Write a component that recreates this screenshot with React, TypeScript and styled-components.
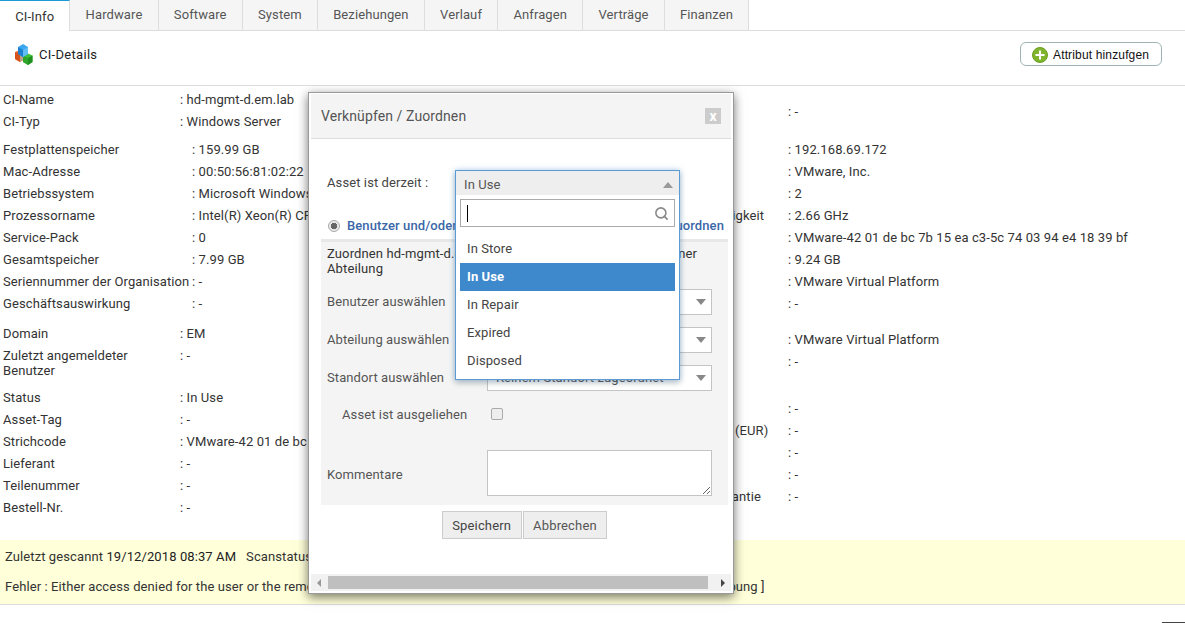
import React from 'react'
import styled, { createGlobalStyle } from 'styled-components'
import { Search } from 'lucide-react'

const GlobalStyle = createGlobalStyle`
  html, body {
    margin: 0;
    padding: 0;
    background: #fff;
  }
  body {
    font-family: Roboto, "Liberation Sans", sans-serif;
    font-size: 13px;
    letter-spacing: 0.1px;
    color: #333;
  }
`

const tabs = ['CI-Info', 'Hardware', 'Software', 'System', 'Beziehungen', 'Verlauf', 'Anfragen', 'Verträge', 'Finanzen']

type Row = { label: string; value: string; tall?: boolean }

const leftGroups: { labelWidth: number; gap: number; rows: Row[] }[] = [
  {
    labelWidth: 177,
    gap: 3,
    rows: [
      { label: 'CI-Name', value: 'hd-mgmt-d.em.lab' },
      { label: 'CI-Typ', value: 'Windows Server' },
    ],
  },
  {
    labelWidth: 189,
    gap: 6,
    rows: [
      { label: 'Festplattenspeicher', value: '159.99 GB' },
      { label: 'Mac-Adresse', value: '00:50:56:81:02:22' },
      { label: 'Betriebssystem', value: 'Microsoft Windows Server 2012 R2' },
      { label: 'Prozessorname', value: 'Intel(R) Xeon(R) CPU X5650' },
      { label: 'Service-Pack', value: '0' },
      { label: 'Gesamtspeicher', value: '7.99 GB' },
      { label: 'Seriennummer der Organisation', value: '-' },
      { label: 'Geschäftsauswirkung', value: '-' },
    ],
  },
  {
    labelWidth: 177,
    gap: 8,
    rows: [
      { label: 'Domain', value: 'EM' },
      { label: 'Zuletzt angemeldeter Benutzer', value: '-', tall: true },
      { label: 'Status', value: 'In Use' },
      { label: 'Asset-Tag', value: '-' },
      { label: 'Strichcode', value: 'VMware-42 01 de bc 7b 15 ea c3' },
      { label: 'Lieferant', value: '-' },
      { label: 'Teilenummer', value: '-' },
      { label: 'Bestell-Nr.', value: '-' },
    ],
  },
]

const rightGroups: { gap: number; rows: Row[] }[] = [
  {
    gap: 15,
    rows: [{ label: 'Standort', value: '-' }],
  },
  {
    gap: 16,
    rows: [
      { label: 'IP-Adresse', value: '192.168.69.172' },
      { label: 'Hersteller', value: 'VMware, Inc.' },
      { label: 'Anzahl Prozessoren', value: '2' },
      { label: 'Prozessorgeschwindigkeit', value: '2.66 GHz' },
      { label: 'Seriennummer', value: 'VMware-42 01 de bc 7b 15 ea c3-5c 74 03 94 e4 18 39 bf' },
      { label: 'Virtueller Speicher', value: '9.24 GB' },
      { label: 'Gerätemodell', value: 'VMware Virtual Platform' },
      { label: 'Abteilung', value: '-' },
    ],
  },
  {
    gap: 14,
    rows: [
      { label: 'Produkt', value: 'VMware Virtual Platform' },
      { label: 'Standort', value: '-' },
    ],
  },
  {
    gap: 25,
    rows: [
      { label: 'Erworben am', value: '-' },
      { label: 'Anschaffungskosten (EUR)', value: '-' },
      { label: 'Eingangsdatum', value: '-' },
      { label: 'Leasing', value: '-' },
      { label: 'Ablaufdatum der Garantie', value: '-' },
    ],
  },
]

const statusItems = ['In Store', 'In Use', 'In Repair', 'Expired', 'Disposed']

const CubesIcon = () => (
  <svg width="20" height="22" viewBox="1 0 20 22">
    <path d="M2 8l5-2 5 2v7l-5 3-5-3z" fill="#e8692c" />
    <path d="M2 8l5 2.500V18l-5-3z" fill="#d4521c" />
    <path d="M7 10.500L12 8v7l-5 3z" fill="#b9a18a" />
    <path d="M10 11.500l5-2 4.500 2v6.500l-4.500 3-5-3z" fill="#3fc23a" />
    <path d="M10 11.500l5 2.500v7l-5-3z" fill="#2fa52c" />
    <path d="M15 14l4.500-2.500V18l-4.500 3z" fill="#1f8f1f" />
    <path d="M5 3l5-3 5 3v7l-5 3-5-3z" fill="#3aa6ee" />
    <path d="M5 3l5 3v7l-5-3z" fill="#1c7fd0" />
    <path d="M10 6l5-3v7l-5 3z" fill="#62bdf5" />
  </svg>
)

const PlusIcon = () => (
  <svg width="16" height="16" viewBox="0 0 16 16">
    <circle cx="8" cy="8" r="7.500" fill="#7fb52c" stroke="#6a9c22" />
    <path d="M8 3.500v9M3.500 8h9" stroke="#fff" strokeWidth="2" />
  </svg>
)

const App = () => (
  <S.Page>
    <GlobalStyle />
    <S.TabBar>
      {tabs.map((tab, i) => (
        <S.Tab key={tab} $active={i === 0}>{tab}</S.Tab>
      ))}
    </S.TabBar>

    <S.DetailsHeader>
      <S.DetailsTitle>
        <CubesIcon />
        CI-Details
      </S.DetailsTitle>
      <S.AddButton>
        <PlusIcon />
        Attribut hinzufgen
      </S.AddButton>
    </S.DetailsHeader>

    <S.Columns>
      <S.LeftColumn>
        {leftGroups.map(group => (
          <S.Group key={group.rows[0].label} $gap={group.gap}>
            {group.rows.map(row => (
              <S.InfoRow key={row.label} $tall={row.tall}>
                <S.Label $width={group.labelWidth} $tall={row.tall}>{row.label}</S.Label>
                <S.Value>: {row.value}</S.Value>
              </S.InfoRow>
            ))}
          </S.Group>
        ))}
      </S.LeftColumn>
      <S.RightColumn>
        {rightGroups.map(group => (
          <S.Group key={group.rows[0].label + group.gap} $gap={group.gap}>
            {group.rows.map(row => (
              <S.InfoRow key={row.label}>
                <S.Label $width={178} $nowrap>{row.label}</S.Label>
                <S.Value>: {row.value}</S.Value>
              </S.InfoRow>
            ))}
          </S.Group>
        ))}
      </S.RightColumn>
    </S.Columns>

    <S.ScanBand>
      <S.ScanLine>
        Zuletzt gescannt <S.ScanDate>19/12/2018 08:37 AM</S.ScanDate> &nbsp; Scanstatus : Fehlgeschlagen
      </S.ScanLine>
      <S.ScanLine>
        Fehler : Either access denied for the user or the remote DCOM option might be disabled in the workstation . [ Zur Fehlerbehebung ]
      </S.ScanLine>
    </S.ScanBand>

    <S.CornerEdge />

    <S.Modal>
      <S.ModalHeader>
        Verknüpfen / Zuordnen
        <S.CloseButton>x</S.CloseButton>
      </S.ModalHeader>

      <S.AssetRow>
        <S.AssetLabel>Asset ist derzeit :</S.AssetLabel>
        <S.StatusSelect>
          <S.Dropdown>
            <S.DropdownHead>
              In Use
              <S.Caret $up />
            </S.DropdownHead>
            <S.SearchBox>
              <S.TextCursor />
              <Search size={15} color="#888" strokeWidth={2.5} />
            </S.SearchBox>
            <S.OptionList>
              {statusItems.map(item => (
                <S.Option key={item} $selected={item === 'In Use'}>{item}</S.Option>
              ))}
            </S.OptionList>
          </S.Dropdown>
        </S.StatusSelect>
      </S.AssetRow>

      <S.AssignRow>
        <S.AssignOption>
          <S.Radio />
          Benutzer und/oder Abteilung
        </S.AssignOption>
        <S.AssignOption>Zuordnen</S.AssignOption>
      </S.AssignRow>

      <S.FormPanel>
        <S.Intro>Zuordnen hd-mgmt-d.em.lab zu einem Benutzer und/oder einer Abteilung</S.Intro>
        <S.FormRow>
          <S.FieldLabel>Benutzer auswählen</S.FieldLabel>
          <S.FakeSelect><S.Caret /></S.FakeSelect>
        </S.FormRow>
        <S.FormRow>
          <S.FieldLabel>Abteilung auswählen</S.FieldLabel>
          <S.FakeSelect><S.Caret /></S.FakeSelect>
        </S.FormRow>
        <S.FormRow>
          <S.FieldLabel>Standort auswählen</S.FieldLabel>
          <S.FakeSelect>
            Keinem Standort zugeordnet
            <S.Caret />
          </S.FakeSelect>
        </S.FormRow>
        <S.LoanRow>
          <S.LoanLabel>Asset ist ausgeliehen</S.LoanLabel>
          <S.Checkbox />
        </S.LoanRow>
        <S.CommentRow>
          <S.CommentLabel>Kommentare</S.CommentLabel>
          <S.Comment />
        </S.CommentRow>
      </S.FormPanel>

      <S.Actions>
        <S.ActionButton $dark>Speichern</S.ActionButton>
        <S.ActionButton>Abbrechen</S.ActionButton>
      </S.Actions>

      <S.ScrollBar>
        <S.ScrollArrow $dir="left" />
        <S.ScrollThumb />
        <S.ScrollArrow $dir="right" />
      </S.ScrollBar>
    </S.Modal>
  </S.Page>
)

export default App

const S = {
  Page: styled.div`
    position: relative;
    width: 1185px;
    height: 623px;
    overflow: hidden;
    line-height: 22px;
  `,
  TabBar: styled.div`
    display: flex;
    height: 30px;
    border-bottom: 1px solid #ddd;
    background: #fff;
  `,
  Tab: styled.div<{ $active?: boolean }>`
    box-sizing: border-box;
    height: ${p => (p.$active ? '31px' : '30px')};
    padding: 0 15.220px;
    line-height: ${p => (p.$active ? '32px' : '30px')};
    font-size: 13px;
    color: ${p => (p.$active ? '#333' : '#555')};
    background: ${p => (p.$active ? '#fff' : '#f5f5f5')};
    border-right: 1px solid #ddd;
    border-top: ${p => (p.$active ? '1px solid #1b9ad6' : 'none')};
  `,
  DetailsHeader: styled.div`
    display: flex;
    align-items: center;
    justify-content: space-between;
    box-sizing: border-box;
    height: 55px;
    border-bottom: 1px solid #ddd;
    padding: 0 23px 8px 14px;
  `,
  DetailsTitle: styled.div`
    display: flex;
    align-items: center;
    gap: 5px;
    padding-top: 1px;
    letter-spacing: 0.3px;
    color: #222;
  `,
  AddButton: styled.button`
    display: flex;
    align-items: center;
    gap: 5px;
    box-sizing: border-box;
    width: 142px;
    height: 24px;
    padding: 1px 0 0 11px;
    border: 1px solid #9fb3b3;
    border-radius: 6px;
    background: #fff;
    font: 12px "Liberation Sans", Arial, sans-serif;
    letter-spacing: 0.15px;
    color: #111;
  `,
  Columns: styled.div`
    display: flex;
  `,
  LeftColumn: styled.div`
    width: 607px;
    padding-left: 3px;
    overflow: hidden;
  `,
  RightColumn: styled.div`
    flex: 1;
  `,
  Group: styled.div<{ $gap: number }>`
    margin-top: ${p => p.$gap}px;
  `,
  InfoRow: styled.div<{ $tall?: boolean }>`
    display: flex;
    height: ${p => (p.$tall ? '42px' : '22px')};
    white-space: nowrap;
  `,
  Label: styled.div<{ $width: number; $tall?: boolean; $nowrap?: boolean }>`
    flex: none;
    width: ${p => p.$width}px;
    color: #333;
    white-space: ${p => (p.$nowrap ? 'nowrap' : 'normal')};
    line-height: ${p => (p.$tall ? '15px' : '22px')};
    padding-top: ${p => (p.$tall ? '3px' : '0')};
  `,
  Value: styled.div`
    color: #333;
  `,
  ScanBand: styled.div`
    position: absolute;
    left: 0;
    right: 0;
    top: 540px;
    box-sizing: border-box;
    height: 65px;
    padding: 6px 5px 0;
    background: #ffffd9;
    border-bottom: 1px solid #ddd;
    overflow: hidden;
    white-space: nowrap;
  `,
  ScanLine: styled.div`
    height: 30px;
    line-height: 22px;
  `,
  ScanDate: styled.span`
    color: #222;
  `,
  CornerEdge: styled.div`
    position: absolute;
    right: 0;
    bottom: 0;
    width: 23px;
    height: 1px;
    background: #444;
  `,
  Modal: styled.div`
    position: absolute;
    left: 308px;
    top: 92px;
    box-sizing: border-box;
    width: 426px;
    height: 502px;
    padding: 1px 2px 2px;
    background: #fff;
    border: 1px solid #999;
    box-shadow: 0 3px 10px rgba(0, 0, 0, 0.55);
    display: flex;
    flex-direction: column;
  `,
  ModalHeader: styled.div`
    display: flex;
    align-items: center;
    justify-content: space-between;
    flex: none;
    box-sizing: border-box;
    height: 45px;
    padding: 0 10px;
    background: #f4f4f4;
    border-bottom: 1px solid #ddd;
    font-size: 14px;
    color: #555;
  `,
  CloseButton: styled.span`
    display: flex;
    align-items: center;
    justify-content: center;
    width: 16px;
    height: 16px;
    background: #ccc;
    color: #fff;
    font-size: 14px;
    font-weight: 700;
    line-height: 1;
  `,
  AssetRow: styled.div`
    display: flex;
    flex: none;
    margin-top: 31px;
    height: 25px;
    padding-left: 16px;
  `,
  AssetLabel: styled.div`
    width: 128px;
    color: #444;
    line-height: 25px;
  `,
  StatusSelect: styled.div`
    position: relative;
    width: 225px;
  `,
  Dropdown: styled.div`
    position: absolute;
    z-index: 2;
    left: 0;
    top: 0;
    box-sizing: border-box;
    width: 225px;
    height: 210px;
    background: #fff;
    border: 1px solid #5b9bd5;
    box-shadow: 0 0 6px rgba(91, 155, 213, 0.45), 0 3px 6px rgba(0, 0, 0, 0.2);
  `,
  DropdownHead: styled.div`
    display: flex;
    align-items: center;
    justify-content: space-between;
    box-sizing: border-box;
    height: 24px;
    padding: 3px 6px 0 8px;
    background: #eee;
    color: #555;
  `,
  SearchBox: styled.div`
    display: flex;
    align-items: center;
    justify-content: space-between;
    box-sizing: border-box;
    width: 215px;
    height: 28px;
    margin: 4px 0 0 4px;
    padding: 0 5px 0 6px;
    border: 1px solid #aaa;
  `,
  TextCursor: styled.span`
    display: block;
    width: 1px;
    height: 17px;
    background: #000;
  `,
  OptionList: styled.div`
    margin: 8px 0 0 4px;
    width: 215px;
  `,
  Option: styled.div<{ $selected?: boolean }>`
    height: 28px;
    padding-left: 7px;
    line-height: 28px;
    color: ${p => (p.$selected ? '#fff' : '#444')};
    font-weight: ${p => (p.$selected ? 700 : 400)};
    background: ${p => (p.$selected ? '#3e88cc' : 'transparent')};
  `,
  Caret: styled.span<{ $up?: boolean }>`
    width: 0;
    height: 0;
    margin-left: auto;
    border-left: 5px solid transparent;
    border-right: 5px solid transparent;
    ${p => (p.$up ? 'border-bottom: 6px solid #999;' : 'border-top: 6px solid #888;')}
  `,
  AssignRow: styled.div`
    display: flex;
    flex: none;
    justify-content: space-between;
    margin-top: 19px;
    height: 24px;
    padding: 0 7px 0 17px;
    line-height: 24px;
  `,
  AssignOption: styled.div`
    display: flex;
    align-items: center;
    gap: 7px;
    color: #3a67a8;
    font-weight: 500;
  `,
  Radio: styled.span`
    box-sizing: border-box;
    width: 12px;
    height: 12px;
    border-radius: 50%;
    background: radial-gradient(circle, #666 0 3px, #e8e8e8 3.500px);
    border: 1px solid #aaa;
  `,
  FormPanel: styled.div`
    flex: none;
    box-sizing: border-box;
    height: 266px;
    margin: 1px 3px 0 10px;
    padding: 4px 6px 0;
    background: #f4f4f4;
    border-top: 3px solid #e8e8e8;
  `,
  Intro: styled.div`
    height: 43px;
    padding-right: 22px;
    line-height: 15px;
    letter-spacing: 0.13px;
    color: #333;
  `,
  FormRow: styled.div`
    display: flex;
    align-items: center;
    height: 26px;
    margin-bottom: 12px;
  `,
  FieldLabel: styled.div`
    flex: none;
    width: 160px;
    color: #555;
  `,
  FakeSelect: styled.div`
    display: flex;
    align-items: center;
    box-sizing: border-box;
    width: 225px;
    height: 26px;
    padding: 0 5px 0 8px;
    background: #fff;
    border: 1px solid #c4c4c4;
    color: #555;
  `,
  LoanRow: styled.div`
    display: flex;
    align-items: center;
    height: 22px;
    padding-left: 15px;
  `,
  LoanLabel: styled.div`
    width: 149px;
    padding-top: 2px;
    color: #555;
  `,
  Checkbox: styled.span`
    box-sizing: border-box;
    width: 12px;
    height: 12px;
    border: 1px solid #aaa;
    border-radius: 2px;
    background: #eee;
  `,
  CommentRow: styled.div`
    display: flex;
    align-items: center;
    margin-top: 25px;
  `,
  CommentLabel: styled.div`
    flex: none;
    width: 160px;
    padding-top: 4px;
    color: #555;
  `,
  Comment: styled.textarea`
    box-sizing: border-box;
    width: 225px;
    height: 46px;
    margin: 0;
    padding: 2px;
    border: 1px solid #c4c4c4;
    background: #fff;
    outline: none;
  `,
  Actions: styled.div`
    display: flex;
    flex: none;
    justify-content: center;
    gap: 1px;
    margin-top: 6px;
    padding-left: 7px;
  `,
  ActionButton: styled.button<{ $dark?: boolean }>`
    box-sizing: border-box;
    height: 28px;
    padding: 0 9.500px;
    background: #eee;
    border: 1px solid #ccc;
    color: ${p => (p.$dark ? '#444' : '#555')};
    font: 13px Roboto, sans-serif;
    letter-spacing: 0.15px;
  `,
  ScrollBar: styled.div`
    display: flex;
    flex: none;
    align-items: center;
    height: 17px;
    margin-top: auto;
    background: #f1f1f1;
    padding: 0 6px;
  `,
  ScrollArrow: styled.span<{ $dir: 'left' | 'right' }>`
    width: 0;
    height: 0;
    border-top: 4px solid transparent;
    border-bottom: 4px solid transparent;
    ${p => (p.$dir === 'left' ? 'border-right: 4px solid #999;' : 'border-left: 4px solid #444; margin-left: auto;')}
  `,
  ScrollThumb: styled.div`
    width: 380px;
    height: 13px;
    margin-left: 7px;
    background: #bfbfbf;
  `,
}
